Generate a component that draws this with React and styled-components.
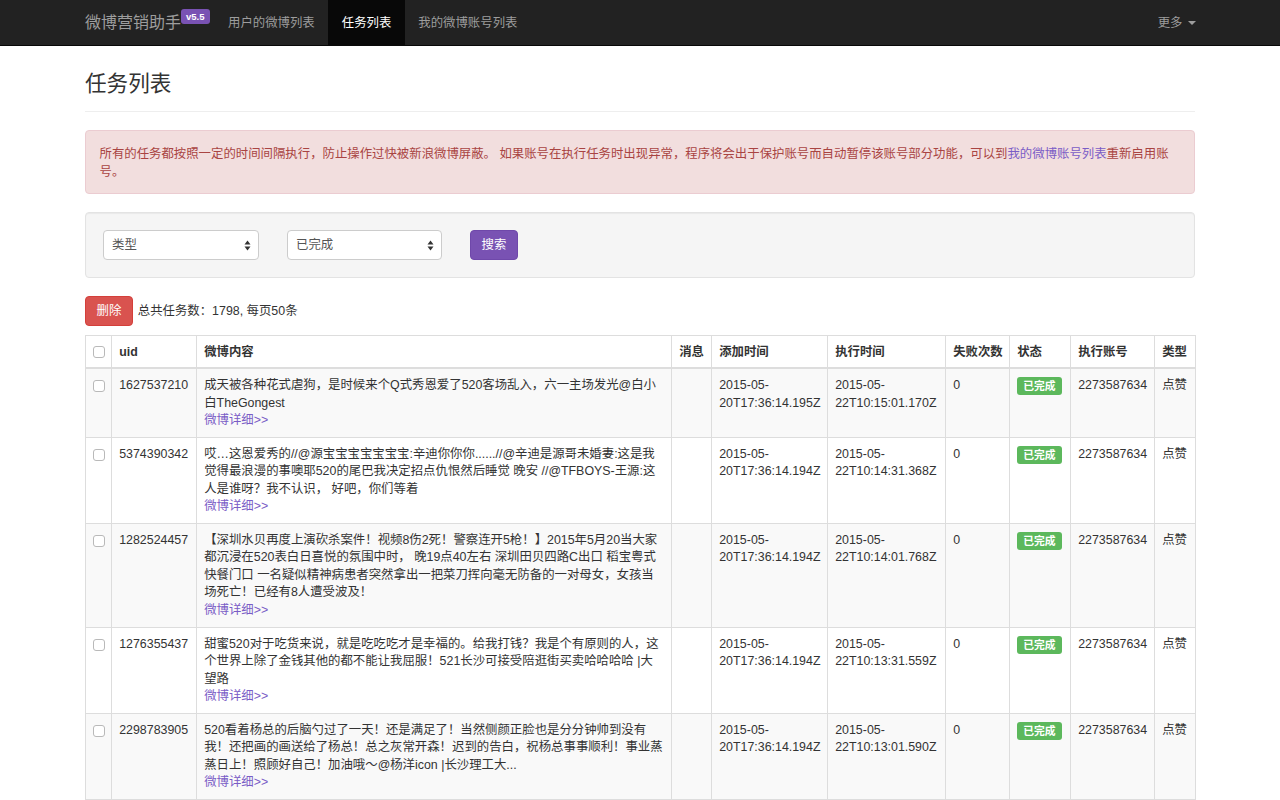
import React from "react";
import styled, { createGlobalStyle } from "styled-components";

const GlobalStyle = createGlobalStyle`
  html, body { margin: 0; padding: 0; background: #fff; }
  body {
    font-family: "Liberation Sans", "Noto Sans CJK SC", sans-serif;
    font-size: 12.4px;
    line-height: 18px;
    color: #333;
  }
  * { box-sizing: border-box; }
`;

const Navbar = styled.nav`
  background: #222;
  border-bottom: 1px solid #080808;
  height: 46px;
`;

const NavInner = styled.div`
  width: 1110px;
  margin: 0 auto;
  height: 45px;
  display: flex;
  align-items: stretch;
`;

const Brand = styled.a`
  display: flex;
  align-items: center;
  font-size: 16px;
  color: #9d9d9d;
  text-decoration: none;
`;

const Badge = styled.span`
  align-self: flex-start;
  margin-top: 9px;
  margin-left: 0;
  background: #7952b3;
  color: #fff;
  font-size: 9.5px;
  font-weight: bold;
  line-height: 11px;
  padding: 2px 5px 2px;
  border-radius: 3px;
`;

const NavList = styled.div`
  display: flex;
  margin-left: 5px;
`;

const NavLink = styled.a`
  display: flex;
  align-items: center;
  padding: 0 13.5px;
  color: ${(p) => (p.$active ? "#fff" : "#9d9d9d")};
  background: ${(p) => (p.$active ? "#080808" : "transparent")};
  text-decoration: none;
`;

const NavRight = styled(NavLink)`
  margin-left: auto;
  margin-right: -14px;
`;

const Caret = styled.span`
  display: inline-block;
  width: 0;
  height: 0;
  margin-left: 5px;
  border-top: 4px solid #9d9d9d;
  border-left: 4px solid transparent;
  border-right: 4px solid transparent;
`;

const Container = styled.main`
  width: 1110px;
  margin: 0 auto;
`;

const PageHeader = styled.div`
  padding-bottom: 8px;
  border-bottom: 1px solid #eee;
  margin-bottom: 18px;
`;

const Title = styled.h1`
  margin: 26px 0 7px;
  font-size: 21.6px;
  line-height: 24px;
  font-weight: 400;
  color: #333;
`;

const Alert = styled.div`
  background: #f2dede;
  border: 1px solid #ebccd1;
  color: #a94442;
  border-radius: 4px;
  padding: 13.5px 13.5px 12.5px;
  margin-bottom: 18px;
`;

const Link = styled.a`
  color: #7a5cc6;
  text-decoration: none;
`;

const BlockLink = styled(Link)`
  display: block;
`;

const Well = styled.div`
  background: #f5f5f5;
  border: 1px solid #e3e3e3;
  border-radius: 4px;
  box-shadow: inset 0 1px 1px rgba(0, 0, 0, 0.05);
  padding: 17px;
  margin-bottom: 18px;
  display: flex;
  align-items: center;
  gap: 28px;
`;

const SelectBox = styled.div`
  width: ${(p) => p.$w}px;
  height: 30px;
  background: #fff;
  border: 1px solid #ccc;
  border-radius: 4px;
  padding: 0 7px 0 8px;
  display: flex;
  align-items: center;
  justify-content: space-between;
  color: #555;
`;

const Button = styled.button`
  height: 30px;
  padding: 0 10.5px;
  border: 1px solid ${(p) => p.$border};
  background: ${(p) => p.$bg};
  color: #fff;
  border-radius: 4px;
  font-family: inherit;
  font-size: 12.4px;
  line-height: 18px;
`;

const Toolbar = styled.div`
  display: flex;
  align-items: center;
  gap: 5px;
  margin-bottom: 9px;
`;

const Table = styled.table`
  width: 100%;
  border-collapse: collapse;
  table-layout: fixed;
  border: 1px solid #ddd;
`;

const Th = styled.th`
  padding: 6.8px 7.2px 6.5px;
  border: 1px solid #ddd;
  border-bottom: 2px solid #ddd;
  text-align: left;
  vertical-align: bottom;
  font-weight: bold;
  white-space: nowrap;
`;

const Td = styled.td`
  padding: 7.8px 7.2px 7.4px;
  border: 1px solid #ddd;
  text-align: left;
  vertical-align: top;
  line-height: 17.5px;
`;

const Row = styled.tr`
  background: ${(p) => (p.$odd ? "#f9f9f9" : "#fff")};
`;

const Check = styled.span`
  display: block;
  width: 12px;
  height: 12px;
  margin: 3px 0;
  border: 1px solid #b9b9b9;
  border-radius: 3px;
  background: #fff;
`;

const Label = styled.span`
  display: inline-block;
  background: #5cb85c;
  color: #fff;
  font-size: 10.8px;
  font-weight: bold;
  line-height: 12px;
  padding: 3px 6px;
  border-radius: 3px;
`;

const SelectArrows = () => (
  <svg width="7" height="11" viewBox="0 0 7 11">
    <path d="M3.5 0.5 L6.5 4.5 L0.5 4.5 Z" fill="#333" />
    <path d="M3.5 10.5 L6.5 6.5 L0.5 6.5 Z" fill="#333" />
  </svg>
);

const rows = [
  {
    uid: "1627537210",
    text: "成天被各种花式虐狗，是时候来个Q式秀恩爱了520客场乱入，六一主场发光@白小白TheGongest",
    add: "2015-05-20T17:36:14.195Z",
    exec: "2015-05-22T10:15:01.170Z",
  },
  {
    uid: "5374390342",
    text: "哎…这恩爱秀的//@源宝宝宝宝宝宝宝:辛迪你你你......//@辛迪是源哥未婚妻:这是我觉得最浪漫的事噢耶520的尾巴我决定招点仇恨然后睡觉 晚安 //@TFBOYS-王源:这人是谁呀？我不认识， 好吧，你们等着",
    add: "2015-05-20T17:36:14.194Z",
    exec: "2015-05-22T10:14:31.368Z",
  },
  {
    uid: "1282524457",
    text: "【深圳水贝再度上演砍杀案件！视频8伤2死！警察连开5枪！】2015年5月20当大家都沉浸在520表白日喜悦的氛围中时， 晚19点40左右 深圳田贝四路C出口 稻宝粤式快餐门口 一名疑似精神病患者突然拿出一把菜刀挥向毫无防备的一对母女，女孩当场死亡！已经有8人遭受波及！",
    add: "2015-05-20T17:36:14.194Z",
    exec: "2015-05-22T10:14:01.768Z",
  },
  {
    uid: "1276355437",
    text: "甜蜜520对于吃货来说，就是吃吃吃才是幸福的。给我打钱？我是个有原则的人，这个世界上除了金钱其他的都不能让我屈服！521长沙可接受陪逛街买卖哈哈哈哈 |大望路",
    add: "2015-05-20T17:36:14.194Z",
    exec: "2015-05-22T10:13:31.559Z",
  },
  {
    uid: "2298783905",
    text: "520看着杨总的后脑勺过了一天！还是满足了！当然侧颜正脸也是分分钟帅到没有我！还把画的画送给了杨总！总之灰常开森！迟到的告白，祝杨总事事顺利！事业蒸蒸日上！照顾好自己！加油哦～@杨洋icon |长沙理工大...",
    add: "2015-05-20T17:36:14.194Z",
    exec: "2015-05-22T10:13:01.590Z",
  },
];

const colWidths = [26, 85, 475, 40, 116, 118, 64, 61, 84, 41];
const headers = ["uid", "微博内容", "消息", "添加时间", "执行时间", "失败次数", "状态", "执行账号", "类型"];

export default function App() {
  return (
    <>
      <GlobalStyle />
      <Navbar>
        <NavInner>
          <Brand href="#">微博营销助手</Brand>
          <Badge>v5.5</Badge>
          <NavList>
            <NavLink href="#">用户的微博列表</NavLink>
            <NavLink href="#" $active>
              任务列表
            </NavLink>
            <NavLink href="#">我的微博账号列表</NavLink>
          </NavList>
          <NavRight href="#">
            更多
            <Caret />
          </NavRight>
        </NavInner>
      </Navbar>
      <Container>
        <PageHeader>
          <Title>任务列表</Title>
        </PageHeader>
        <Alert>
          所有的任务都按照一定的时间间隔执行，防止操作过快被新浪微博屏蔽。 如果账号在执行任务时出现异常，程序将会出于保护账号而自动暂停该账号部分功能，可以到
          <Link href="#">我的微博账号列表</Link>重新启用账号。
        </Alert>
        <Well>
          <SelectBox $w={156}>
            <span>类型</span>
            <SelectArrows />
          </SelectBox>
          <SelectBox $w={155}>
            <span>已完成</span>
            <SelectArrows />
          </SelectBox>
          <Button $bg="#7952b3" $border="#6f48aa">
            搜索
          </Button>
        </Well>
        <Toolbar>
          <Button $bg="#d9534f" $border="#d43f3a">
            删除
          </Button>
          <span>总共任务数：1798, 每页50条</span>
        </Toolbar>
        <Table>
          <colgroup>
            {colWidths.map((w, i) => (
              <col key={i} style={{ width: w }} />
            ))}
          </colgroup>
          <thead>
            <tr>
              <Th>
                <Check />
              </Th>
              {headers.map((h) => (
                <Th key={h}>{h}</Th>
              ))}
            </tr>
          </thead>
          <tbody>
            {rows.map((r, i) => (
              <Row key={r.uid} $odd={i % 2 === 0}>
                <Td>
                  <Check />
                </Td>
                <Td>{r.uid}</Td>
                <Td>
                  {r.text}
                  <BlockLink href="#">微博详细&gt;&gt;</BlockLink>
                </Td>
                <Td></Td>
                <Td>{r.add}</Td>
                <Td>{r.exec}</Td>
                <Td>0</Td>
                <Td>
                  <Label>已完成</Label>
                </Td>
                <Td>2273587634</Td>
                <Td>点赞</Td>
              </Row>
            ))}
          </tbody>
        </Table>
      </Container>
    </>
  );
}
